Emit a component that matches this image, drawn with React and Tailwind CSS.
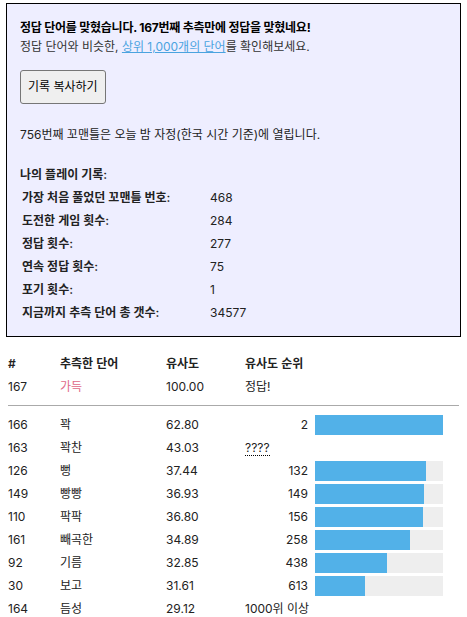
import React from "react";

const STATS = [
  ["가장 처음 풀었던 꼬맨틀 번호:", "468"],
  ["도전한 게임 횟수:", "284"],
  ["정답 횟수:", "277"],
  ["연속 정답 횟수:", "75"],
  ["포기 횟수:", "1"],
  ["지금까지 추측 단어 총 갯수:", "34577"],
];

const GUESSES = [
  { n: 166, word: "꽉", sim: "62.80", rank: 2 },
  { n: 163, word: "꽉찬", sim: "43.03", rank: "????" },
  { n: 126, word: "뻥", sim: "37.44", rank: 132 },
  { n: 149, word: "빵빵", sim: "36.93", rank: 149 },
  { n: 110, word: "팍팍", sim: "36.80", rank: 156 },
  { n: 161, word: "빼곡한", sim: "34.89", rank: 258 },
  { n: 92, word: "기름", sim: "32.85", rank: 438 },
  { n: 30, word: "보고", sim: "31.61", rank: 613 },
  { n: 164, word: "듬성", sim: "29.12", rank: "1000위 이상" },
];

const COLS = "grid grid-cols-[52px_106px_79px_70px_128px] items-center h-[23px]";

function RankCell({ rank }) {
  if (typeof rank === "number") {
    return <div className="text-right pr-[7px]">{rank}</div>;
  }
  if (rank === "????") {
    return (
      <div>
        <span className="border-b border-dotted border-black leading-[14px] inline-block">
          ????
        </span>
      </div>
    );
  }
  return <div className="text-right pr-[7px] whitespace-nowrap">{rank}</div>;
}

function Bar({ rank }) {
  if (typeof rank !== "number") return <div />;
  const pct = (1000 - rank) / 10;
  return (
    <div className="h-[20px] bg-[#eeeeee]">
      <div className="h-full bg-[#52b1e8]" style={{ width: pct + "%" }} />
    </div>
  );
}

export default function App() {
  return (
    <div
      className="text-[12px] text-[#222] pt-[3px] px-[6px]"
      style={{ fontFamily: '"Inter", "Noto Sans CJK KR", sans-serif' }}
    >
      <div className="border border-black bg-[#eeeeff] px-[13px] pt-[14px] pb-[12px]">
        <p className="font-bold leading-[19px] text-black tracking-[-0.02em]">
          정답 단어를 맞혔습니다. 167번째 추측만에 정답을 맞혔네요!
        </p>
        <p className="leading-[19px] text-[#333]">
          정답 단어와 비슷한,{" "}
          <a href="#" className="text-[#4aa3df] underline">
            상위 1,000개의 단어
          </a>
          를 확인해보세요.
        </p>
        <button className="mt-[14px] h-[34px] px-[7px] border border-[#767676] rounded-[3px] bg-[#efefef] text-[12px] text-black">
          기록 복사하기
        </button>
        <p className="mt-[21px] leading-[19px]">
          756번째 꼬맨틀은 오늘 밤 자정(한국 시간 기준)에 열립니다.
        </p>
        <p className="mt-[21px] leading-[19px] font-semibold">나의 플레이 기록:</p>
        <div className="mt-[2px] pl-[2px]">
          {STATS.map(([label, value]) => (
            <div key={label} className="flex items-center h-[23px]">
              <div className="w-[188px] font-semibold">{label}</div>
              <div>{value}</div>
            </div>
          ))}
        </div>
      </div>

      <div className="mt-[15px] pl-[2px] pr-[2px]">
        <div className={COLS + " font-semibold"}>
          <div>#</div>
          <div>추측한 단어</div>
          <div>유사도</div>
          <div className="whitespace-nowrap">유사도 순위</div>
          <div />
        </div>
        <div className={COLS}>
          <div>167</div>
          <div className="text-[#e06a88]">가득</div>
          <div>100.00</div>
          <div>정답!</div>
          <div />
        </div>
        <div className="h-[15px] flex items-center">
          <div className="w-full h-px bg-[#aaaaaa]" />
        </div>
        {GUESSES.map((g) => (
          <div key={g.n} className={COLS}>
            <div>{g.n}</div>
            <div>{g.word}</div>
            <div>{g.sim}</div>
            <RankCell rank={g.rank} />
            <Bar rank={g.rank} />
          </div>
        ))}
      </div>
    </div>
  );
}
